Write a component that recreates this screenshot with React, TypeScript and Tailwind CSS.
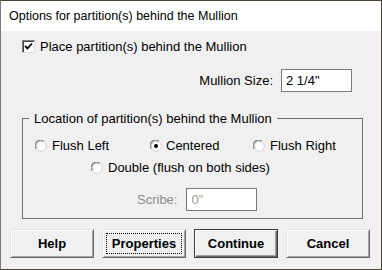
import React from 'react';

const font = { fontFamily: '"Liberation Sans", Arial, sans-serif' };

function Radio({ checked }: { checked?: boolean }) {
  return (
    <svg width="12" height="12" viewBox="0 0 12 12" className="shrink-0">
      <circle cx="6" cy="6" r="5.5" fill="#ffffff" />
      <circle cx="6" cy="6" r="5.3" stroke="#d4d4d4" strokeWidth="1" fill="none" />
      <path d="M1.2 8.6 A5.3 5.3 0 0 1 8.6 1.2" stroke="#7f7f7f" strokeWidth="1.1" fill="none" />
      <path d="M2.3 8.2 A4.2 4.2 0 0 1 8.2 2.3" stroke="#c0c0c0" strokeWidth="1" fill="none" />
      {checked && <circle cx="6" cy="6" r="2" fill="#000000" />}
    </svg>
  );
}

function Checkbox() {
  return (
    <div className="w-[13px] h-[13px] shrink-0 border border-t-[#808080] border-l-[#808080] border-r-[#dcdcdc] border-b-[#dcdcdc] bg-white shadow-[inset_1px_1px_0_#404040] flex items-center justify-center">
      <svg width="9" height="9" viewBox="0 0 9 9">
        <path d="M1 4 L3.5 6.5 L8 1.5" stroke="#000" strokeWidth="1.8" fill="none" />
      </svg>
    </div>
  );
}

function Btn({ label, focus, def }: { label: string; focus?: boolean; def?: boolean }) {
  const base =
    'w-[84px] h-[29px] bg-[#f0f0f0] text-[13px] font-bold text-black flex p-[3px] ' +
    (def
      ? 'border border-[#3c3c3c] shadow-[inset_1px_1px_0_#ffffff,inset_-1px_-1px_0_#696969,inset_-2px_-2px_0_#a0a0a0]'
      : 'border border-t-[#e3e3e3] border-l-[#e3e3e3] border-r-[#696969] border-b-[#696969] shadow-[inset_1px_1px_0_#ffffff,inset_-1px_-1px_0_#a0a0a0]');
  return (
    <button className={base} style={font}>
      <span
        className={
          'flex-1 flex items-center justify-center leading-none ' +
          (focus ? 'border border-dotted border-black' : 'border border-transparent')
        }
      >
        {label}
      </span>
    </button>
  );
}

export default function App() {
  return (
    <div
      className="w-[382px] h-[270px] border border-[#4f4438] border-l-[#7a7a7a] bg-[#f0f0f0] flex flex-col text-black"
      style={font}
    >
      <div className="h-[30px] bg-white flex items-center pl-[8px] text-[12.5px] shrink-0">
        Options for partition(s) behind the Mullion
      </div>

      <div className="flex-1 flex flex-col">
        <div className="flex items-center gap-[5px] ml-[21px] mt-[9px] text-[13px] leading-[13px]">
          <Checkbox />
          <span>Place partition(s) behind the Mullion</span>
        </div>

        <div className="flex items-center justify-end gap-[8px] mr-[29px] mt-[16px] text-[13px]">
          <span>Mullion Size:</span>
          <div className="w-[71px] h-[23px] bg-white border border-[#7a7a7a] flex items-center pl-[4px]">
            2 1/4"
          </div>
        </div>

        <fieldset className="ml-[21px] w-[341px] h-[108px] mt-[19px] border border-[#707070] px-0 pb-0 pt-0 text-[13px]">
          <legend className="ml-[6px] px-[5px] leading-[15px]">
            Location of partition(s) behind the Mullion
          </legend>
          <div className="flex items-center mt-[12px] ml-[12px] leading-[15px]">
            <div className="w-[115px] flex items-center gap-[5px]">
              <Radio />
              <span>Flush Left</span>
            </div>
            <div className="w-[103px] flex items-center gap-[4px]">
              <Radio checked />
              <span>Centered</span>
            </div>
            <div className="flex items-center gap-[5px]">
              <Radio />
              <span>Flush Right</span>
            </div>
          </div>
          <div className="flex items-center gap-[5px] ml-[68px] mt-[7px] leading-[15px]">
            <Radio />
            <span>Double (flush on both sides)</span>
          </div>
          <div className="flex items-center ml-[114px] mt-[13px] gap-[9px]">
            <span className="text-[#8d8d8d]">Scribe:</span>
            <div className="w-[71px] h-[23px] bg-white border border-[#7a7a7a] flex items-center pl-[4px] text-[#a09a94]">
              0"
            </div>
          </div>
        </fieldset>

        <div className="flex gap-[8px] ml-[9px] mt-[10px]">
          <Btn label="Help" />
          <Btn label="Properties" focus />
          <Btn label="Continue" def />
          <Btn label="Cancel" />
        </div>
      </div>
    </div>
  );
}
